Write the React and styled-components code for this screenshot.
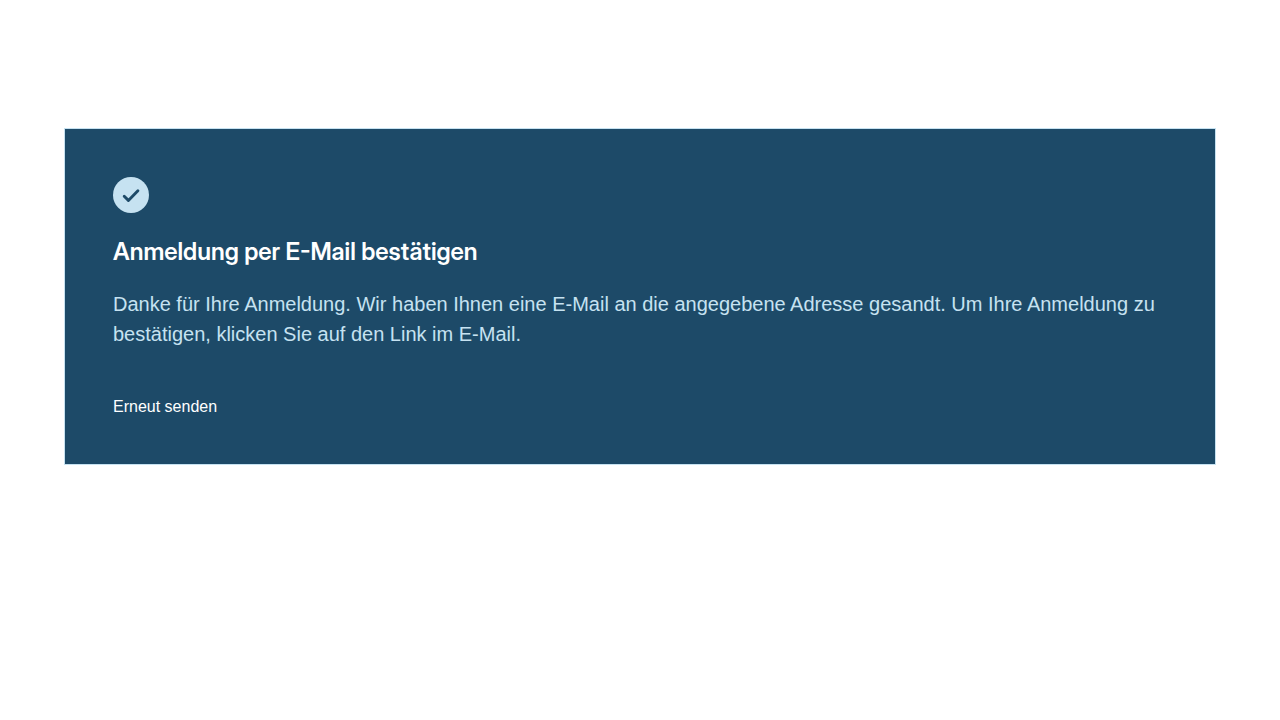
import React from "react";
import styled, { createGlobalStyle } from "styled-components";

const GlobalStyle = createGlobalStyle`
  body {
    margin: 0;
    background: #fff;
    font-family: "Liberation Sans", Arial, sans-serif;
  }
`;

const Page = styled.main`
  padding: 128px 64px;
`;

const Card = styled.section`
  display: flex;
  flex-direction: column;
  align-items: flex-start;
  padding: 48px;
  border: 1px solid #c6e2f1;
  background: #1d4a68;
`;

const StatusIcon = styled.svg`
  display: block;
  width: 36px;
  height: 36px;
`;

const Title = styled.h1`
  margin: 24px 0 0;
  color: #fff;
  font-family: "Inter Display", Inter, sans-serif;
  font-size: 24px;
  font-weight: 600;
  line-height: 30px;
`;

const Message = styled.p`
  margin: 22px 0 0;
  color: #c6e2f1;
  font-size: 20px;
  line-height: 30px;
`;

const ResendButton = styled.button`
  margin: 48px 0 0;
  padding: 0;
  border: 0;
  background: none;
  color: #fff;
  font: inherit;
  font-size: 16px;
  line-height: 19px;
  cursor: pointer;
`;

export default function App() {
  return (
    <>
      <GlobalStyle />
      <Page>
        <Card>
          <StatusIcon viewBox="0 0 36 36" aria-hidden="true">
            <circle cx="18" cy="18" r="18" fill="#c6e2f1" />
            <path
              d="M11.2 19.2l4.2 4.2L24.9 13.7"
              fill="none"
              stroke="#1d4a68"
              strokeWidth="2.9"
              strokeLinecap="round"
              strokeLinejoin="round"
            />
          </StatusIcon>
          <Title>Anmeldung per E-Mail bestätigen</Title>
          <Message>
            Danke für Ihre Anmeldung. Wir haben Ihnen eine E-Mail an die angegebene Adresse gesandt. Um Ihre
            Anmeldung zu bestätigen, klicken Sie auf den Link im E-Mail.
          </Message>
          <ResendButton type="button">Erneut senden</ResendButton>
        </Card>
      </Page>
    </>
  );
}
